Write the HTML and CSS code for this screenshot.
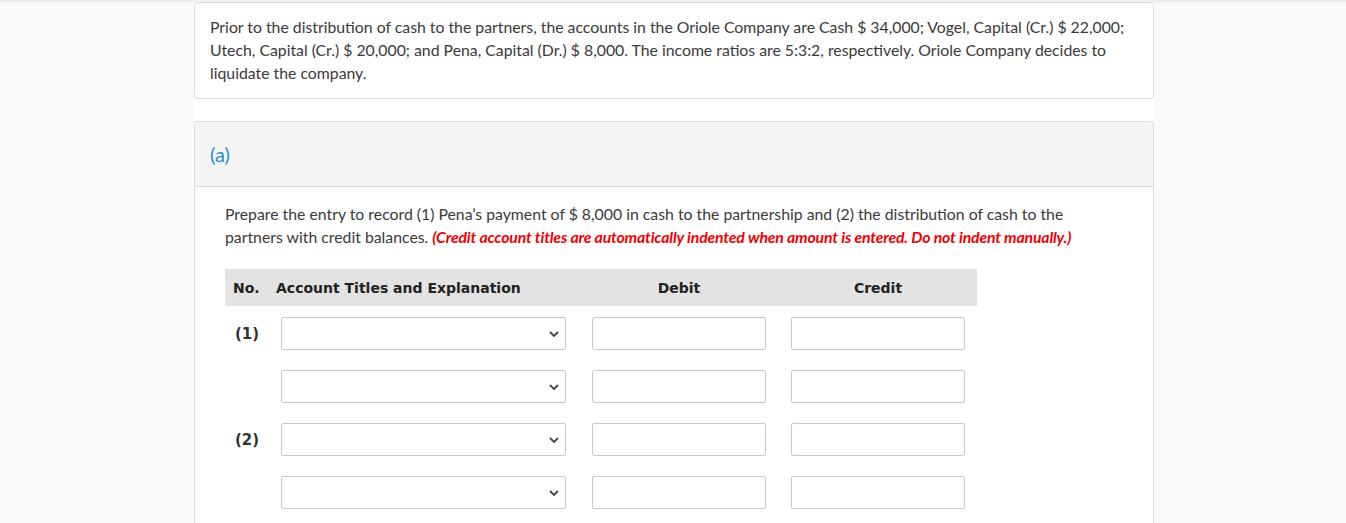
FILE: index.html
```html
<!DOCTYPE html>
<html lang="en">
<head>
<meta charset="utf-8">
<title>Oriole Company</title>
<link rel="stylesheet" href="styles.css">
</head>
<body>
<div class="topshade"></div>
<div class="page">
  <div class="card intro">
    Prior to the distribution of cash to the partners, the accounts in the Oriole Company are Cash $ 34,000; Vogel, Capital (Cr.) $ 22,000; Utech, Capital (Cr.) $ 20,000; and Pena, Capital (Dr.) $ 8,000. The income ratios are 5:3:2, respectively. Oriole Company decides to liquidate the company.
  </div>
  <div class="card part">
    <div class="part-head">(a)</div>
    <div class="part-body">
      <p class="prompt">Prepare the entry to record (1) Pena’s payment of $ 8,000 in cash to the partnership and (2) the distribution of cash to the partners with credit balances. <span class="note">(Credit account titles are automatically indented when amount is entered. Do not indent manually.)</span></p>
      <div class="journal">
        <div class="jhead">
          <div class="h-no">No.</div>
          <div class="h-acct">Account Titles and Explanation</div>
          <div class="h-debit">Debit</div>
          <div class="h-credit">Credit</div>
        </div>
        <div class="jrow">
          <div class="rno">(1)</div>
          <div class="sel"><svg class="chev" viewBox="0 0 10 6" width="10" height="6"><path d="M1 1 L5 5 L9 1" fill="none" stroke="#444" stroke-width="1.8"/></svg></div>
          <div class="amt debit"></div>
          <div class="amt credit"></div>
        </div>
        <div class="jrow">
          <div class="rno"></div>
          <div class="sel"><svg class="chev" viewBox="0 0 10 6" width="10" height="6"><path d="M1 1 L5 5 L9 1" fill="none" stroke="#444" stroke-width="1.8"/></svg></div>
          <div class="amt debit"></div>
          <div class="amt credit"></div>
        </div>
        <div class="jrow">
          <div class="rno">(2)</div>
          <div class="sel"><svg class="chev" viewBox="0 0 10 6" width="10" height="6"><path d="M1 1 L5 5 L9 1" fill="none" stroke="#444" stroke-width="1.8"/></svg></div>
          <div class="amt debit"></div>
          <div class="amt credit"></div>
        </div>
        <div class="jrow">
          <div class="rno"></div>
          <div class="sel"><svg class="chev" viewBox="0 0 10 6" width="10" height="6"><path d="M1 1 L5 5 L9 1" fill="none" stroke="#444" stroke-width="1.8"/></svg></div>
          <div class="amt debit"></div>
          <div class="amt credit"></div>
        </div>
      </div>
    </div>
  </div>
</div>
</body>
</html>
```
FILE: styles.css
```css
html, body {
  margin: 0;
  padding: 0;
  background: #fafafa;
  height: 100%;
}
body {
  font-family: Lato, "Open Sans", sans-serif;
  color: #3a3a3a;
  overflow: hidden;
}
.topshade {
  position: absolute;
  left: 0;
  top: 0;
  width: 100%;
  height: 4px;
  background: linear-gradient(to bottom, rgba(0,0,0,0.07), rgba(0,0,0,0));
  pointer-events: none;
}
.page {
  width: 960px;
  margin-left: 194px;
  background: #fff;
  min-height: 100%;
  padding-top: 2px;
  box-sizing: border-box;
}
.card {
  border: 1px solid #dcdcdc;
  border-radius: 4px;
  background: #fff;
}
.intro {
  padding: 12px 15px 14px;
  font-size: 15.8px;
  line-height: 23px;
}
.part {
  margin-top: 22px;
  border-bottom: none;
  border-radius: 4px 4px 0 0;
}
.part-head {
  height: 64px;
  display: flex;
  align-items: center;
  padding: 0 15px;
  background: #f4f4f4;
  border-bottom: 1px solid #dcdcdc;
  color: #1b8fd6;
  font-size: 20px;
  border-radius: 4px 4px 0 0;
}
.part-body {
  padding: 15px 30px 40px;
}
.prompt {
  margin: 0;
  font-size: 15.8px;
  line-height: 23px;
}
.note {
  color: #f00000;
  font-weight: bold;
  font-style: italic;
  letter-spacing: -0.16px;
}
.journal {
  width: 752px;
  margin-top: 21px;
  font-family: "DejaVu Sans", Verdana, sans-serif;
}
.jhead {
  display: flex;
  align-items: center;
  height: 37px;
  background: #e3e3e3;
  font-weight: bold;
  font-size: 14px;
  color: #222;
}
.h-no {
  width: 43px;
  padding-left: 8px;
}
.h-acct {
  width: 316px;
}
.h-debit {
  width: 174px;
  text-align: center;
}
.h-credit {
  width: 174px;
  margin-left: 25px;
  text-align: center;
}
.jrow {
  display: flex;
  align-items: center;
  margin-top: 20px;
}
.jhead + .jrow {
  margin-top: 11px;
}
.rno {
  width: 46px;
  padding-left: 10px;
  font-weight: bold;
  font-size: 15px;
  color: #333;
}
.sel, .amt {
  height: 33px;
  box-sizing: border-box;
  border: 1px solid #c9c9c9;
  border-radius: 2px;
  background: #fff;
}
.sel {
  width: 285px;
  display: flex;
  align-items: center;
  justify-content: flex-end;
  padding-right: 6px;
}
.chev {
  display: block;
}
.amt {
  width: 174px;
}
.debit {
  margin-left: 26px;
}
.credit {
  margin-left: 25px;
}
```
